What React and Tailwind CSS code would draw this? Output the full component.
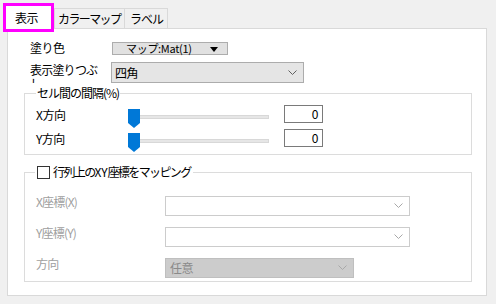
import React from 'react';

const FONT = '"Noto Sans CJK JP", "Noto Sans", sans-serif';

const Chevron = ({ color = '#606060' }) => (
  <svg width="9" height="5" viewBox="0 0 9 5" className="shrink-0">
    <polyline points="0.5,0.5 4.5,4.5 8.5,0.5" fill="none" stroke={color} strokeWidth="1" />
  </svg>
);

const Thumb = () => (
  <svg width="12" height="19" viewBox="0 0 12 19" className="absolute left-0 top-0">
    <polygon points="0,0 12,0 12,14 6,19 0,14" fill="#0078d7" />
  </svg>
);

const SliderRow = ({ label }) => (
  <div className="flex items-start h-[18px]">
    <div className="w-[92px] leading-[18px] pt-[1px]">{label}</div>
    <div className="relative w-[141px] h-[19px] mt-[4px]">
      <div className="absolute left-0 right-0 top-[6px] h-[4px] bg-[#e6e6e6] border border-[#d8d8d8]" />
      <Thumb />
    </div>
    <div className="ml-[15px] w-[39px] h-[18px] border border-[#7a7a7a] bg-white text-right pr-[4px] leading-[16px]">0</div>
  </div>
);

const DisabledRow = ({ label, width, value, filled }) => (
  <div className="flex items-start h-[20px]">
    <div className="w-[129px] text-[#a0a0a0] leading-[14px] mt-[-1px] tracking-[-0.8px]">{label}</div>
    <div
      className={
        filled
          ? 'flex items-center justify-between h-[20px] border border-[#bfbfbf] bg-[#cccccc] pl-[4px] pr-[6px]'
          : 'flex items-center justify-between h-[20px] border border-[#cccccc] bg-white pl-[4px] pr-[6px]'
      }
      style={{ width }}
    >
      <span className="text-[#8a8a8a]">{value}</span>
      <Chevron color="#a8a8a8" />
    </div>
  </div>
);

export default function App() {
  return (
    <div className="w-[496px] h-[304px] bg-[#f0f0f0] overflow-hidden text-[12px] text-black tracking-[-0.5px]" style={{ fontFamily: FONT }}>
      {/* tabs */}
      <div className="flex items-start h-[28px] pl-[3px] pt-[3px] whitespace-nowrap">
        <div className="relative z-10 w-[51px] h-[29px] border-[3px] border-[#ff00ff] bg-white pl-[9px] leading-[20px] pt-[2px]">表示</div>
        <div className="mt-[5px] h-[20px] w-[71px] border border-b-0 border-[#d9d9d9] bg-[#f0f0f0] pl-[3px] leading-[19px] tracking-[-1.6px]">カラーマップ</div>
        <div className="mt-[5px] h-[20px] w-[43px] border border-l-0 border-b-0 border-[#d9d9d9] bg-[#f0f0f0] pl-[5px] leading-[19px] tracking-[-1px]">ラベル</div>
      </div>

      {/* panel */}
      <div className="ml-[7px] w-[480px] h-[268px] border border-[#d9d9d9] bg-white pl-[16px] pt-[13px]">
        <div className="flex items-center h-[12px]">
          <div className="w-[82px] ml-[6px] leading-[12px]">塗り色</div>
          <div className="relative w-[116px] h-[13px] border border-[#adadad] bg-[#e1e1e1] flex items-center">
            <span className="ml-[13px] text-[11px] leading-[11px] tracking-[-0.3px]">マップ:Mat(1)</span>
            <svg width="8" height="5" viewBox="0 0 8 5" className="absolute right-[9px] top-[4px]">
              <polygon points="0,0 8,0 4,5" fill="#000" />
            </svg>
          </div>
        </div>

        <div className="flex items-start mt-[8px] h-[21px]">
          <div className="w-[78px] ml-[6px] h-[21px] overflow-hidden leading-[14px] pt-[1px] tracking-[-0.8px]">表示塗りつぶし</div>
          <div className="ml-[3px] w-[193px] h-[21px] border border-[#acacac] bg-[#e5e5e5] flex items-center justify-between pl-[3px] pr-[6px]">
            <span>四角</span>
            <Chevron />
          </div>
        </div>

        <fieldset className="mt-[3px] w-[448px] border border-[#dcdcdc] pb-[7px]">
          <legend className="ml-[11px] px-[1px] leading-[14px] tracking-[-1px]">セル間の間隔(%)</legend>
          <div className="mt-[5px] pl-[11px] flex flex-col gap-[6px]">
            <SliderRow label="X方向" />
            <SliderRow label="Y方向" />
          </div>
        </fieldset>

        <fieldset className="mt-[10px] w-[448px] h-[117px] border border-[#dcdcdc]">
          <legend className="ml-[10px] px-[2px] leading-[14px]">
            <span className="inline-flex items-center">
              <span className="inline-block w-[13px] h-[13px] border border-[#333333] bg-white mr-[3px]" />
              <span className="tracking-[-1.6px]">
                行列上の<span className="tracking-[-0.2px]">XY</span>座標をマッピング
              </span>
            </span>
          </legend>
          <div className="mt-[15px] pl-[11px] flex flex-col gap-[11px]">
            <DisabledRow label="X座標(X)" width={245} value="" />
            <DisabledRow label="Y座標(Y)" width={245} value="" />
            <DisabledRow label="方向" width={189} value="任意" filled />
          </div>
        </fieldset>
      </div>
    </div>
  );
}
